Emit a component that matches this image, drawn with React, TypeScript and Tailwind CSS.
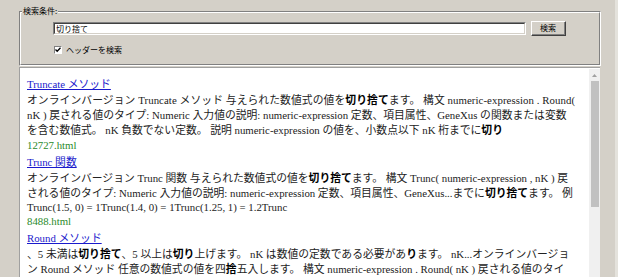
import React from "react";

const serif = { fontFamily: '"Liberation Serif", "Noto Sans CJK JP", serif' };
const ui = { fontFamily: '"Noto Sans CJK JP", "Liberation Sans", sans-serif' };

function B({ children }: { children: React.ReactNode }) {
  return <b className="font-bold text-black">{children}</b>;
}

function Line({
  children,
  h = 15,
  className = "",
}: {
  children: React.ReactNode;
  h?: number;
  className?: string;
}) {
  return (
    <div
      className={`whitespace-nowrap text-[#222] ${className}`}
      style={{ height: h, lineHeight: `${h}px` }}
    >
      {children}
    </div>
  );
}

function Title({ children }: { children: React.ReactNode }) {
  return (
    <div className="h-[18px] leading-[18px] whitespace-nowrap">
      <a className="text-[#1a1acc] underline cursor-pointer">{children}</a>
    </div>
  );
}

function Url({ children }: { children: React.ReactNode }) {
  return <div className="h-[15px] leading-[15px] text-[#2a8a2a]">{children}</div>;
}

export default function App() {
  return (
    <div className="w-[618px] h-[277px] bg-[#d4d0c8] overflow-hidden flex" style={ui}>
      <div className="w-[600px] flex flex-col">
        {/* group box */}
        <div className="relative ml-[19px] mt-[11px] w-[582px] h-[55px] border border-t-[#808080] border-l-[#808080] border-r-white border-b-white">
          <div className="h-full w-full border border-t-white border-l-white border-r-[#808080] border-b-[#808080] pl-[32px] pt-[9px]">
            <div className="flex items-start">
              <div className="w-[473px] h-[13px] bg-white border border-t-[#808080] border-l-[#808080] border-r-white border-b-white">
                <div className="h-full border border-t-[#404040] border-l-[#404040] border-r-[#d4d0c8] border-b-[#d4d0c8] pl-[1px] text-[8px] leading-[9px] text-black">
                  切り捨て
                </div>
              </div>
              <div className="ml-[5px] w-[35px] h-[15px] border border-t-white border-l-white border-r-[#404040] border-b-[#404040] -mt-[1px]">
                <div className="h-full w-full border-r border-b border-[#808080] flex items-center justify-center text-[8px] text-black">
                  検索
                </div>
              </div>
            </div>
            <div className="flex items-center mt-[9px] ml-[1px]">
              <div className="w-[8px] h-[8px] bg-white border border-t-[#808080] border-l-[#808080] border-r-white border-b-white flex items-center justify-center">
                <svg width="6" height="6" viewBox="0 0 6 6">
                  <path d="M0.5 2.5 L2.2 4.3 L5.5 0.8" stroke="#000" strokeWidth="1.3" fill="none" />
                </svg>
              </div>
              <span className="ml-[4px] text-[8px] leading-[10px] text-black">ヘッダーを検索</span>
            </div>
          </div>
          <span className="absolute left-[2px] -top-[7px] px-[1px] bg-[#d4d0c8] text-[8px] leading-[12px] text-black">
            検索条件:
          </span>
        </div>

        {/* results panel */}
        <div className="ml-[19px] mt-[1px] w-[581px] flex-1 bg-white border-t border-l border-[#a0a0a0] flex">
          <div className="flex-1 pl-[7px] pt-[7px] text-[10.8px]" style={serif}>
            <Title>Truncate メソッド</Title>
            <Line className="tracking-[0.07px]">
              オンラインバージョン Truncate メソッド 与えられた数値式の値を<B>切り捨て</B>ます。 構文 numeric-expression . Round(
            </Line>
            <Line>
              nK ) 戻される値のタイプ: Numeric 入力値の説明: numeric-expression 定数、項目属性、GeneXus の関数または変数
            </Line>
            <Line>
              を含む数値式。 nK 負数でない定数。 説明 numeric-expression の値を、小数点以下 nK 桁までに<B>切り</B>
            </Line>
            <Url>12727.html</Url>
            <Title>Trunc 関数</Title>
            <Line>
              オンラインバージョン Trunc 関数 与えられた数値式の値を<B>切り捨て</B>ます。 構文 Trunc( numeric-expression , nK ) 戻
            </Line>
            <Line>
              される値のタイプ: Numeric 入力値の説明: numeric-expression 定数、項目属性、GeneXus...までに<B>切り捨て</B>ます。 例
            </Line>
            <Line h={13}>Trunc(1.5, 0) = 1Trunc(1.4, 0) = 1Trunc(1.25, 1) = 1.2Trunc</Line>
            <Url>8488.html</Url>
            <Title>Round メソッド</Title>
            <Line>
              、5 未満は<B>切り捨て</B>、5 以上は<B>切り</B>上げます。 nK は数値の定数である必要があ<B>り</B>ます。 nK...オンラインバージョ
            </Line>
            <Line>
              ン Round メソッド 任意の数値式の値を四<B>捨</B>五入します。 構文 numeric-expression . Round( nK ) 戻される値のタイ
            </Line>
          </div>
          {/* scrollbar */}
          <div className="w-[11px] mt-[1px] bg-[#f0f0f0] flex flex-col items-center">
            <div className="h-[12px] w-full flex items-center justify-center">
              <svg width="5" height="3" viewBox="0 0 5 3">
                <path d="M0 3 L2.5 0 L5 3 Z" fill="#a0a0a0" />
              </svg>
            </div>
            <div className="w-[8px] h-[126px] bg-[#c1c1c1]" />
          </div>
        </div>
      </div>
      <div className="flex-1 flex">
        <div className="w-[15px] bg-[#d4d0c8]" />
        <div className="flex-1 bg-[#e4e2dc]" />
      </div>
    </div>
  );
}
